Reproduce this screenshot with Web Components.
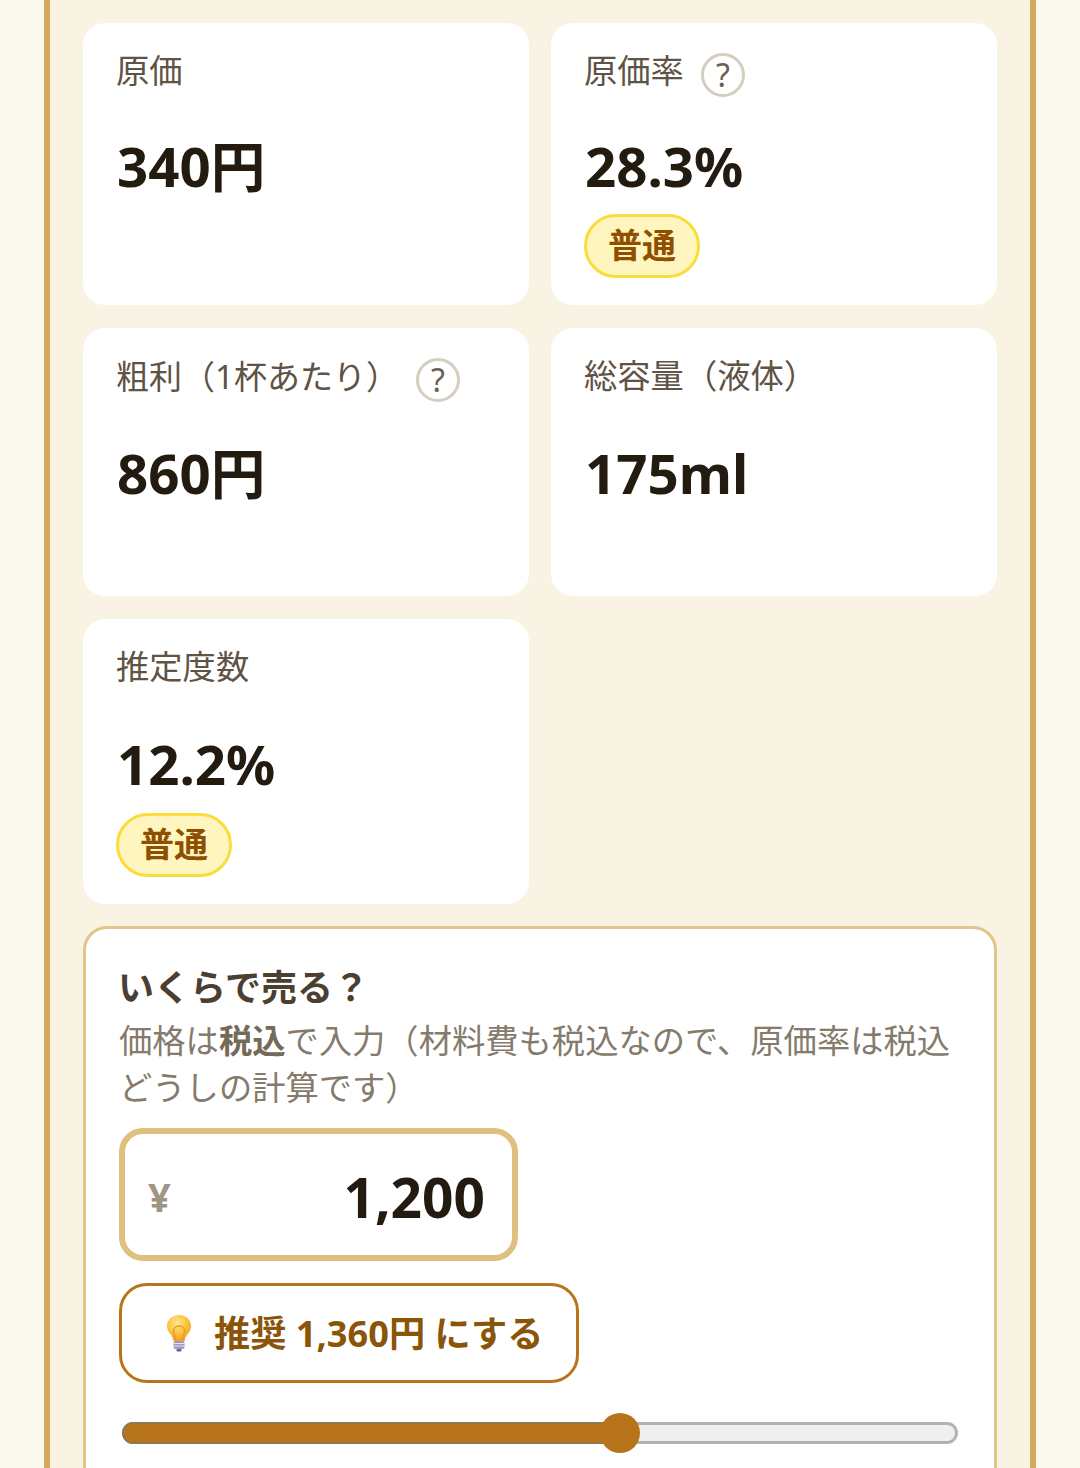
<!DOCTYPE html>
<html lang="ja">
<head>
<meta charset="utf-8">
<title>原価計算</title>
<style>
  html, body { margin: 0; height: 1468px; overflow: hidden; background: #fbf8f0; }
  body { font-family: "Noto Sans", "Noto Sans CJK JP", sans-serif; }
</style>
</head>
<body>
<calc-panel>
  <stat-card label="原価" value="340円" tight></stat-card>
  <stat-card label="原価率" value="28.3%" help badge="普通" tight></stat-card>
  <stat-card label="粗利（1杯あたり）" value="860円" help compact></stat-card>
  <stat-card label="総容量（液体）" value="175ml"></stat-card>
  <stat-card label="推定度数" value="12.2%" badge="普通"></stat-card>
  <price-box slot="after">
    <span slot="title">いくらで売る？</span>
    <span>価格は</span><b>税込</b><span>で入力（材料費も税込なので、原価率は税込</span><br>
    <span>どうしの計算です）</span>
  </price-box>
</calc-panel>

<script>
// outer panel with the two gold side borders
class CalcPanel extends HTMLElement {
  constructor() {
    super();
    this.attachShadow({ mode: "open" });
    this.shadowRoot.innerHTML = `
      <style>
        :host {
          display: block;
          box-sizing: border-box;
          margin: 0 44px;
          height: 1468px;
          padding: 23px 33px 0;
          border: solid #d6aa5c;
          border-width: 0 6px;
          background: #f9f3e3;
          overflow: hidden;
        }
        .grid {
          display: grid;
          grid-template-columns: 446px 446px;
          column-gap: 22px;
          row-gap: 23px;
          margin-bottom: 22px;
        }
      </style>
      <div class="grid"><slot></slot></div>
      <slot name="after"></slot>
    `;
  }
}

class StatCard extends HTMLElement {
  constructor() {
    super();
    this.attachShadow({ mode: "open" });
    const help = this.hasAttribute("help") ? `<help-mark></help-mark>` : "";
    const badge = this.getAttribute("badge");
    this.shadowRoot.innerHTML = `
      <style>
        :host {
          display: block;
          box-sizing: border-box;
          min-height: 268px;
          padding: 25px 33px 27px;
          background: #fff;
          border-radius: 22px;
        }
        .label {
          display: flex;
          align-items: flex-start;
          gap: 17px;
          height: 44px;
          font-size: 33.3px;
          line-height: 44px;
          color: #5f5345;
        }
        :host([compact]) .label { font-size: 33px; }
        :host([compact]) .label span { padding-top: 2px; }
        .value {
          margin-top: 38px;
          padding-left: 1px;
          font-size: 54.6px;
          line-height: 76px;
          font-weight: 700;
          color: #231a10;
        }
        :host([tight]) .value { margin-top: 36px; }
        .badge {
          display: inline-block;
          box-sizing: border-box;
          height: 64px;
          margin-top: 11px;
          padding: 0 21px;
          border: 3px solid #fadc3c;
          border-radius: 32px;
          background: #fff6bf;
          color: #8f4f00;
          font-size: 34px;
          font-weight: 700;
          line-height: 56px;
        }
        :host([tight]) .badge { margin-top: 10px; }
      </style>
      <div class="label"><span>${this.getAttribute("label")}</span>${help}</div>
      <div class="value">${this.getAttribute("value")}</div>
      ${badge ? `<span class="badge">${badge}</span>` : ""}
    `;
  }
}

class HelpMark extends HTMLElement {
  constructor() {
    super();
    this.attachShadow({ mode: "open" });
    this.shadowRoot.innerHTML = `
      <style>
        :host {
          display: flex;
          align-items: center;
          justify-content: center;
          box-sizing: border-box;
          width: 44px;
          height: 44px;
          margin-top: 5px;
          border: 3px solid #d5cdbf;
          border-radius: 50%;
          font-size: 32px;
          line-height: 1;
          color: #6b6051;
        }
      </style>
      ?
    `;
  }
}

class PriceBox extends HTMLElement {
  constructor() {
    super();
    this.attachShadow({ mode: "open" });
    this.shadowRoot.innerHTML = `
      <style>
        :host {
          display: block;
          box-sizing: border-box;
          height: 700px;
          padding: 36px 33px 0;
          background: #fff;
          border: 3px solid #e2c588;
          border-radius: 24px;
        }
        .title {
          margin-bottom: 6px;
          font-size: 36px;
          line-height: 46px;
          font-weight: 700;
          color: #4a3f30;
          margin-left: -1px;
        }
        .desc {
          font-size: 33.3px;
          line-height: 47px;
          color: #857b6c;
          margin-bottom: 17px;
          white-space: nowrap;
        }
        ::slotted(b) { color: #756a58; }
      </style>
      <div class="title"><slot name="title"></slot></div>
      <div class="desc"><slot></slot></div>
      <yen-input value="1,200"></yen-input>
      <suggest-button>推奨 1,360円 にする</suggest-button>
      <price-slider percent="59.6"></price-slider>
    `;
  }
}

class YenInput extends HTMLElement {
  constructor() {
    super();
    this.attachShadow({ mode: "open" });
    this.shadowRoot.innerHTML = `
      <style>
        :host {
          display: flex;
          align-items: center;
          justify-content: space-between;
          box-sizing: border-box;
          width: 399px;
          height: 133px;
          padding: 3px 27px 0 23px;
          border: 6px solid #dfc07f;
          border-radius: 24px;
        }
        .yen { font-size: 40px; font-weight: 700; color: #a09584; }
        .num { font-size: 55px; font-weight: 700; color: #231a10; }
      </style>
      <span class="yen">¥</span>
      <span class="num">${this.getAttribute("value")}</span>
    `;
  }
}

class SuggestButton extends HTMLElement {
  constructor() {
    super();
    this.attachShadow({ mode: "open" });
    this.shadowRoot.innerHTML = `
      <style>
        :host {
          display: flex;
          align-items: center;
          gap: 21px;
          box-sizing: border-box;
          width: 460px;
          height: 100px;
          margin-top: 22px;
          padding: 0 0 0 43px;
          background: #fff;
          border: 3px solid #b8741a;
          border-radius: 28px;
          font-size: 36.2px;
          font-weight: 700;
          color: #8a5508;
          white-space: nowrap;
        }
        svg { width: 28px; height: 38px; flex: none; }
        span { padding-bottom: 4px; }
      </style>
      <svg viewBox="0 0 28 38">
        <defs>
          <radialGradient id="glass" cx="0.42" cy="0.3" r="0.75">
            <stop offset="0" stop-color="#ffe590"/>
            <stop offset="0.55" stop-color="#fdc13c"/>
            <stop offset="1" stop-color="#f39b1c"/>
          </radialGradient>
        </defs>
        <path d="M14 1C6.8 1 2 6 2 12c0 4.6 3 7.2 4.8 10.2 1 1.7 1.3 3 1.5 4.8h11.4c.2-1.8.5-3.1 1.5-4.8C23.500 19.200 26 16.600 26 12 26 6 21.200 1 14 1z" fill="url(#glass)"/>
        <path d="M10.500 26c-.5-4-1.700-6-2-9-.3-3 2.300-5 5.500-5s5.800 2 5.500 5c-.3 3-1.500 5-2 9" fill="none" stroke="#e59a24" stroke-width="1.300"/>
        <rect x="8.500" y="27" width="11" height="8" rx="2" fill="#a794c4"/>
        <path d="M8.500 29.500h11M8.500 32h11" stroke="#e8e2ef" stroke-width="1"/>
        <rect x="11.500" y="35" width="5" height="2.500" rx="1.200" fill="#6f5f8c"/>
      </svg>
      <span><slot></slot></span>
    `;
  }
}

class PriceSlider extends HTMLElement {
  constructor() {
    super();
    this.attachShadow({ mode: "open" });
    const pct = this.getAttribute("percent");
    this.shadowRoot.innerHTML = `
      <style>
        :host {
          display: block;
          position: relative;
          box-sizing: border-box;
          width: 836px;
          height: 22px;
          margin: 39px 0 0 3px;
          background: #efefef;
          border: 3px solid #b2b2b2;
          border-radius: 11px;
        }
        .fill {
          position: absolute;
          box-sizing: border-box;
          left: -3px;
          top: -3px;
          bottom: -3px;
          width: calc(${pct}% + 3px);
          background: #b8741a;
          border: 2px solid #8f7750;
          border-right: none;
          border-radius: 11px 0 0 11px;
        }
        .thumb {
          position: absolute;
          left: calc(${pct}% - 20px);
          top: -12px;
          width: 40px;
          height: 40px;
          background: #b8741a;
          border-radius: 50%;
        }
      </style>
      <div class="fill"></div>
      <div class="thumb"></div>
    `;
  }
}

customElements.define("calc-panel", CalcPanel);
customElements.define("stat-card", StatCard);
customElements.define("help-mark", HelpMark);
customElements.define("price-box", PriceBox);
customElements.define("yen-input", YenInput);
customElements.define("suggest-button", SuggestButton);
customElements.define("price-slider", PriceSlider);
</script>
</body>
</html>
